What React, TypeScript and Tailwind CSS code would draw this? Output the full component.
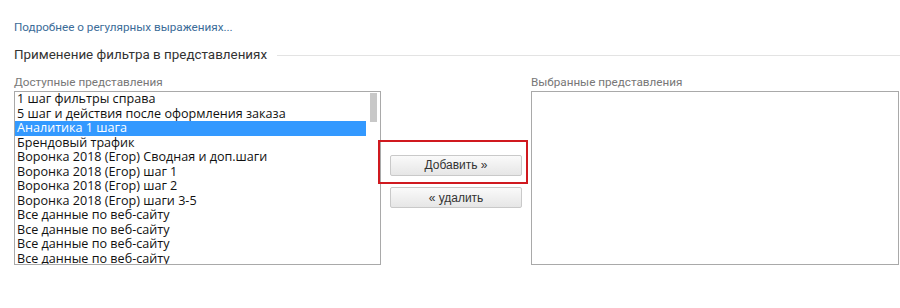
const available = [
  "1 шаг фильтры справа",
  "5 шаг и действия после оформления заказа",
  "Аналитика 1 шага",
  "Брендовый трафик",
  "Воронка 2018 (Егор) Сводная и доп.шаги",
  "Воронка 2018 (Егор) шаг 1",
  "Воронка 2018 (Егор) шаг 2",
  "Воронка 2018 (Егор) шаги 3-5",
  "Все данные по веб-сайту",
  "Все данные по веб-сайту",
  "Все данные по веб-сайту",
  "Все данные по веб-сайту",
];

const selectedIndex = 2;

export default function App() {
  return (
    <div className="h-[308px] w-[900px] bg-white pl-[14px] pt-[14px] font-['Roboto',sans-serif]">
      <a className="text-[11.7px] leading-[16px] text-[#3b6c98]">
        Подробнее о регулярных выражениях...
      </a>

      <div className="mt-[8px] flex items-center">
        <span className="text-[13.4px] leading-[18px] text-[#333]">
          Применение фильтра в представлениях
        </span>
        <div className="ml-[10px] h-px flex-1 bg-[#e3e3e3]" />
      </div>

      <div className="mt-[10px] flex">
        <div className="w-[367px]">
          <div className="text-[11.7px] leading-[17px] text-[#777]">
            Доступные представления
          </div>
          <div className="flex h-[174px] border border-[#a9a9a9] bg-white">
            <ul className="flex-1 overflow-hidden font-['Open_Sans',sans-serif] text-[12.6px] leading-[14.5px] text-[#111]">
              {available.map((name, i) => (
                <li
                  key={i}
                  className={
                    i === selectedIndex
                      ? "whitespace-nowrap bg-[#3399ff] pl-[2px] text-white"
                      : "whitespace-nowrap pl-[2px]"
                  }
                >
                  {name}
                </li>
              ))}
            </ul>
            <div className="w-[14px] pl-[4px] pt-px">
              <div className="h-[29px] w-[7px] bg-[#c8c8c8]" />
            </div>
          </div>
        </div>

        <div className="flex w-[150px] flex-col pl-[9px] pr-[9px] pt-[78px]">
          <div className="relative">
            <button className="h-[21px] w-[132px] rounded-[2px] border border-[#c9c9c9] bg-gradient-to-b from-[#fafafa] to-[#e6e6e6] font-['Liberation_Sans',sans-serif] text-[12px] text-[#333]">
              Добавить »
            </button>
            <div className="pointer-events-none absolute -top-[12px] -bottom-[8px] -left-[12px] -right-[6px] border-2 border-[#d0191f]" />
          </div>
          <button className="mt-[11px] h-[21px] w-[132px] rounded-[2px] border border-[#c9c9c9] bg-gradient-to-b from-[#fafafa] to-[#e6e6e6] font-['Liberation_Sans',sans-serif] text-[12px] text-[#333]">
            « удалить
          </button>
        </div>

        <div className="w-[368px]">
          <div className="text-[11.7px] leading-[17px] text-[#777]">
            Выбранные представления
          </div>
          <div className="h-[174px] border border-[#a9a9a9] bg-white" />
        </div>
      </div>
    </div>
  );
}
